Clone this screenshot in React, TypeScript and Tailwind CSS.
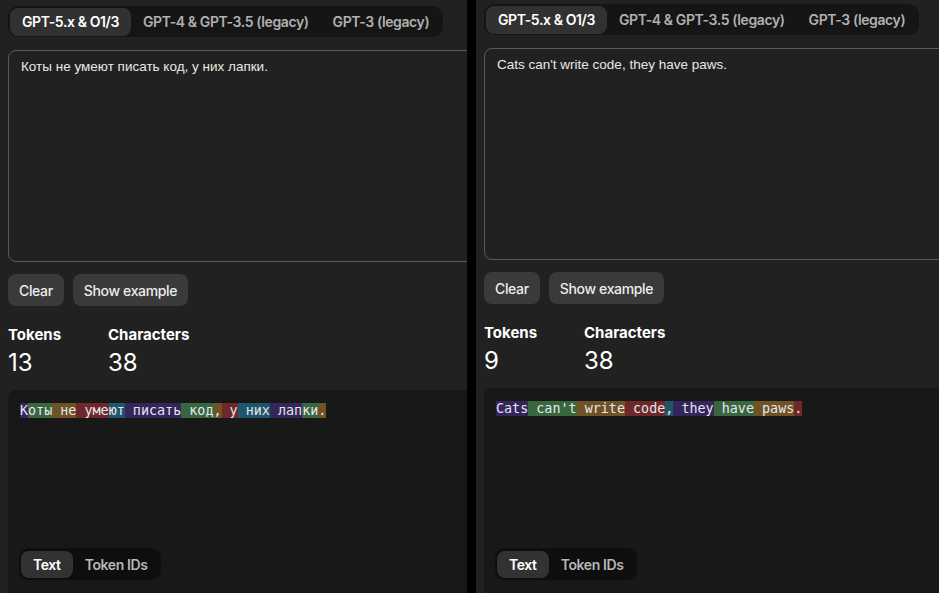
import React from "react";

const COLORS = [
  "bg-[rgba(107,64,216,0.35)]",
  "bg-[rgba(104,222,122,0.4)]",
  "bg-[rgba(244,172,54,0.4)]",
  "bg-[rgba(239,65,70,0.4)]",
  "bg-[rgba(39,181,234,0.4)]",
];

const ui = { fontFamily: "Inter, 'Noto Sans', sans-serif" };
const mono = { fontFamily: "'DejaVu Sans Mono', 'Liberation Mono', monospace" };

function Panel({
  top,
  text,
  tokens,
  chars,
  pieces,
}: {
  top: string;
  text: string;
  tokens: number;
  chars: number;
  pieces: string[];
}) {
  return (
    <div className="h-full flex-1 overflow-hidden bg-[#212121]">
      <div className={`flex h-full w-[520px] flex-col pl-2 ${top}`} style={ui}>
        <div className="flex h-[31px] w-fit items-center rounded-[10px] bg-[#151515] px-[2px] text-[14px] font-semibold tracking-[-0.4px]">
          <div className="flex h-[28px] items-center rounded-lg bg-[#313131] px-[12px] text-white">GPT-5.x &amp; O1/3</div>
          <div className="flex h-[28px] items-center px-[12px] text-[#b0b0b0]">GPT-4 &amp; GPT-3.5 (legacy)</div>
          <div className="flex h-[28px] items-center px-[12px] text-[#b0b0b0]">GPT-3 (legacy)</div>
        </div>
        <div
          className="mt-[13px] h-[212px] rounded-lg border border-[#5a5a5a] bg-[#212121] px-3 py-[6px] text-[13.5px] text-[#e8e8e8]"
          style={{ fontFamily: "'Liberation Sans', Arial, sans-serif" }}
        >
          {text}
        </div>
        <div className="mt-[12px] flex gap-[9px] text-[14px] font-medium tracking-[-0.35px] text-[#ececec]">
          <div className="flex h-[32px] items-center rounded-lg bg-[#3a3a3a] px-[11px]">Clear</div>
          <div className="flex h-[32px] items-center rounded-lg bg-[#3a3a3a] px-[11px]">Show example</div>
        </div>
        <div className="mt-[19px] flex gap-[50px] text-white">
          <div className="w-[50px]">
            <div className="text-[15px] font-bold leading-[20px]">Tokens</div>
            <div className="mt-[2px] text-[24px] leading-[32px]">{tokens}</div>
          </div>
          <div>
            <div className="text-[15px] font-bold leading-[20px]">Characters</div>
            <div className="mt-[2px] text-[24px] leading-[32px]">{chars}</div>
          </div>
        </div>
        <div className="mt-[11px] flex min-h-0 flex-1 flex-col justify-between rounded-tl-lg bg-[#181818] px-3 pb-[13px] pt-[13px]">
          <div className="whitespace-pre text-[13.4px] leading-[16px] text-[#e6e6f0]" style={mono}>
            {pieces.map((p, i) => (
              <span key={i} className={COLORS[i % 5]}>
                {p}
              </span>
            ))}
          </div>
          <div className="-ml-[1px] flex h-[32px] w-fit items-center rounded-[10px] bg-[#0e0e0e] px-[2px] text-[14px] font-semibold tracking-[-0.4px]">
            <div className="flex h-[27px] items-center rounded-lg bg-[#323232] px-3 text-white">Text</div>
            <div className="flex h-[27px] items-center px-3 text-[#b8b8b8]">Token IDs</div>
          </div>
        </div>
      </div>
    </div>
  );
}

export default function App() {
  return (
    <div className="flex h-[593px] w-[939px] overflow-hidden bg-black">
      <div className="h-full w-[467px]">
        <Panel
          top="pt-[6px]"
          text="Коты не умеют писать код, у них лапки."
          tokens={13}
          chars={38}
          pieces={["К", "оты", " не", " уме", "ют", " писать", " код", ",", " у", " них", " лап", "ки", "."]}
        />
      </div>
      <div className="h-full w-[9px] bg-black" />
      <div className="h-full w-[463px]">
        <Panel
          top="pt-[4px]"
          text="Cats can't write code, they have paws."
          tokens={9}
          chars={38}
          pieces={["Cats", " can't", " write", " code", ",", " they", " have", " paws", "."]}
        />
      </div>
    </div>
  );
}
